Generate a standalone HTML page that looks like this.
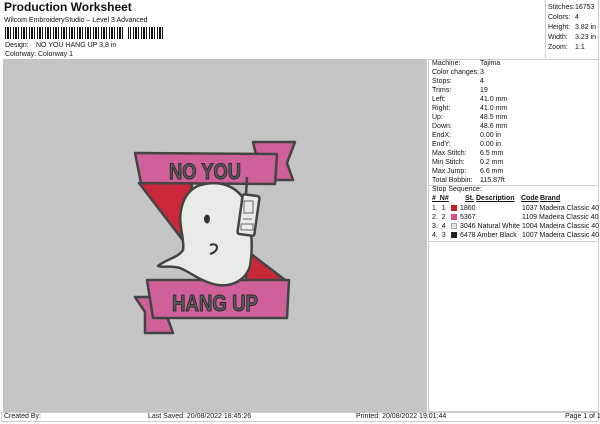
<!DOCTYPE html>
<html><head><style>
*{margin:0;padding:0;box-sizing:border-box}
body{width:600px;height:424px;background:#fff;font-family:"Liberation Sans",sans-serif;position:relative;overflow:hidden;color:#111}
.a{position:absolute;white-space:nowrap}
.s{font-size:7px}
</style></head><body>
<div class="a" style="left:4px;top:0px;font-size:12px;font-weight:bold">Production Worksheet</div>
<div class="a s" style="left:4px;top:17px">Wilcom EmbroideryStudio – Level 3 Advanced</div>
<div class="a" style="left:5px;top:27px;width:160px;height:12px;background:repeating-linear-gradient(90deg,#111 0 1px,#fff 1px 2px,#111 2px 4px,#fff 4px 5px,#111 5px 6px,#fff 6px 8px)"></div>
<div class="a" style="left:124px;top:27px;width:4px;height:12px;background:#fff"></div>
<div class="a s" style="left:5px;top:42px">Design:</div><div class="a s" style="left:36px;top:42px">NO YOU HANG UP 3,8 in</div>
<div class="a s" style="left:5px;top:51px">Colorway:</div><div class="a s" style="left:38px;top:51px">Colorway 1</div>
<div class="a" style="left:545px;top:0;width:54px;height:58px;border-left:1px solid #ccc;border-right:1px solid #ccc"></div>
<div class="a s" style="left:548px;top:3px;line-height:10px">Stitches:<br>Colors:<br>Height:<br>Width:<br>Zoom:</div>
<div class="a s" style="left:575px;top:3px;line-height:10px">16753<br>4<br>3.82 in<br>3.23 in<br>1:1</div>
<div class="a" style="left:3px;top:59px;width:424px;height:353px;background:#c5c5c5"></div>
<div class="a" style="left:428px;top:59px;width:171px;height:353px;border:1px solid #ccc"></div>
<div class="a s" style="left:432px;top:59px;line-height:9px">Machine:<br>Color changes:<br>Stops:<br>Trims:<br>Left:<br>Right:<br>Up:<br>Down:<br>EndX:<br>EndY:<br>Max Stitch:<br>Min Stitch:<br>Max Jump:<br>Total Bobbin:</div>
<div class="a s" style="left:480px;top:59px;line-height:9px">Tajima<br>3<br>4<br>19<br>41.0 mm<br>41.0 mm<br>48.5 mm<br>48.6 mm<br>0.00 in<br>0.00 in<br>6.5 mm<br>0.2 mm<br>6.6 mm<br>115.87ft</div>
<div class="a" style="left:429px;top:185px;width:170px;border-top:1px solid #ccc"></div>
<div class="a s" style="left:432px;top:186px">Stop Sequence:</div>
<div class="a s" style="left:432px;top:195px;font-weight:bold;text-decoration:underline">#&nbsp; N#</div>
<div class="a s" style="left:465px;top:195px;font-weight:bold;text-decoration:underline">St.</div>
<div class="a s" style="left:476px;top:195px;font-weight:bold;text-decoration:underline">Description</div>
<div class="a s" style="left:521px;top:195px;font-weight:bold;text-decoration:underline">Code</div>
<div class="a s" style="left:540px;top:195px;font-weight:bold;text-decoration:underline">Brand</div>
<div class="a s" style="left:432px;top:204px;line-height:9px">1.&nbsp; 1<br>2.&nbsp; 2<br>3.&nbsp; 4<br>4.&nbsp; 3</div>
<div class="a" style="left:451px;top:205px;width:6px;height:6px;background:#c01c28"></div>
<div class="a" style="left:451px;top:214px;width:6px;height:6px;background:#d8508a"></div>
<div class="a" style="left:451px;top:223px;width:6px;height:6px;background:#e8e8e8;border:1px solid #aaa"></div>
<div class="a" style="left:451px;top:232px;width:6px;height:6px;background:#222"></div>
<div class="a s" style="left:460px;top:204px;line-height:9px">1860<br>5367<br>3046 Natural White<br>6478 Amber Black</div>
<div class="a s" style="left:522px;top:204px;line-height:9px">1037 Madeira Classic 40<br>1109 Madeira Classic 40<br>1004 Madeira Classic 40<br>1007 Madeira Classic 40</div>
<div class="a" style="left:429px;top:241px;width:170px;border-top:1px solid #ccc"></div>
<div class="a" style="left:1px;top:412px;width:598px;height:10px;border:1px solid #ccc"></div>
<div class="a s" style="left:4px;top:413px">Created By:</div>
<div class="a s" style="left:148px;top:413px">Last Saved: 20/08/2022 18:45:26</div>
<div class="a s" style="left:356px;top:413px">Printed: 20/08/2022 19:01:44</div>
<div class="a s" style="left:565px;top:413px">Page 1 of 1</div>
<svg class="a" style="left:0;top:0" width="600" height="424">
<g stroke="#444" stroke-width="2.5" stroke-linejoin="round">
<polygon points="253,142 295,142 287,163 293,180 262,180" fill="#d0609a"/>
<polygon points="139,183 192,183 185,243" fill="#c8283a"/>
<polygon points="246,250 289,283 246,283" fill="#c8283a"/>
<polygon points="135,297 160,297 173,333 145,333 145,312" fill="#d0609a"/>
<polygon points="135,153 277,154 275,184 141,183" fill="#d0609a"/>
<polygon points="147,280 289,280 287,318 153,318" fill="#d0609a"/>
<path d="M205,184 C225,180 243,190 247,208 C252,228 253,250 250,266 C246,280 232,287 218,285 C203,283 190,272 180,268 C170,265 163,268 158,266 C166,259 178,258 183,250 C185,240 178,225 181,210 C184,195 192,186 205,184 Z" fill="#e9ebe6"/>
<rect x="240" y="195" width="17" height="40" rx="2" fill="#e9ebe6" transform="rotate(8 248 215)"/>
<line x1="246" y1="195" x2="247" y2="177"/>
</g>
<g stroke="#666" stroke-width="1" fill="none">
<rect x="244" y="201" width="9" height="12"/><line x1="243" y1="219" x2="252" y2="219"/><rect x="241" y="224" width="12" height="6"/>
</g>
<g fill="#333"><ellipse cx="207" cy="219" rx="3" ry="4.5"/></g>
<path d="M210,245 q6,-2 7,2 q0,5 -7,7" stroke="#333" stroke-width="2" fill="none"/>
<text x="205" y="179" font-family="Liberation Sans" font-weight="bold" font-size="22" text-anchor="middle" fill="#5a5a5a" stroke="#2a2a2a" stroke-width="1" textLength="72" lengthAdjust="spacingAndGlyphs">NO YOU</text>
<text x="215" y="311" font-family="Liberation Sans" font-weight="bold" font-size="23" text-anchor="middle" fill="#5a5a5a" stroke="#2a2a2a" stroke-width="1" textLength="86" lengthAdjust="spacingAndGlyphs">HANG UP</text>
</svg>
</body></html>
